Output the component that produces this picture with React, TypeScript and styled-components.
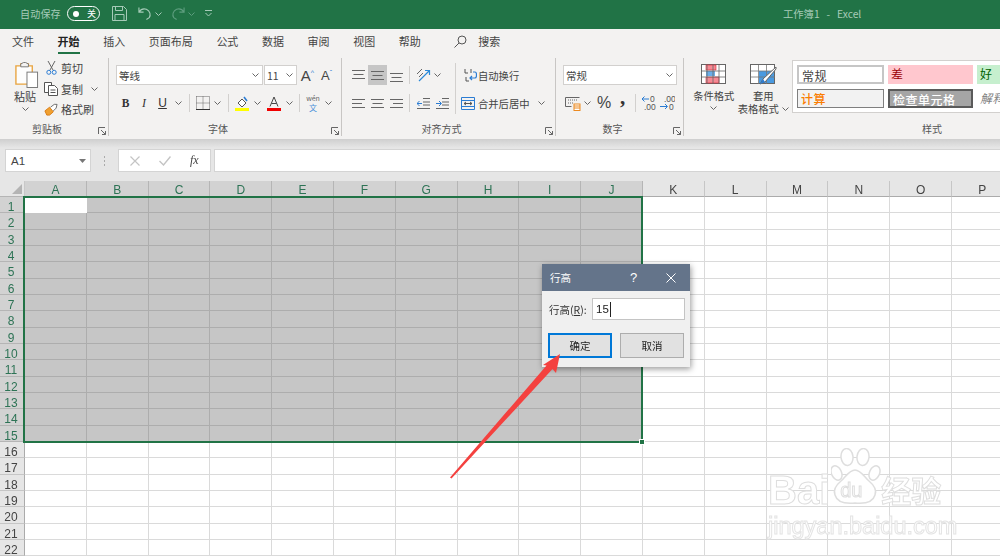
import React from "react";
import styled, { createGlobalStyle } from "styled-components";

const Global = createGlobalStyle`
  html, body { margin: 0; padding: 0; background: #fff; overflow: hidden; }
  * { box-sizing: border-box; }
`;

const FONT = `"Noto Sans CJK SC", "Liberation Sans", sans-serif`;

const Page = styled.div`
  position: relative;
  width: 1000px;
  height: 557px;
  overflow: hidden;
  font-family: ${FONT};
  font-size: 11px;
  color: #444;
  filter: blur(0.45px);
`;

/* ---------- title bar ---------- */
const TitleBar = styled.div`
  height: 29px;
  background: #217346;
  display: flex;
  align-items: center;
  padding: 0 0 2px 20px;
  color: #a6cbb8;
  font-size: 10px;
`;
const AutoSave = styled.span`
  width: 47px;
  letter-spacing: 0.2px;
`;
const Toggle = styled.span`
  width: 33px;
  height: 15px;
  border: 1px solid #fff;
  border-radius: 8px;
  display: flex;
  align-items: center;
  padding: 0 3px 0 5px;
  justify-content: space-between;
  color: #fff;
  font-size: 9px;
`;
const Knob = styled.span`
  width: 6px;
  height: 6px;
  border-radius: 50%;
  background: #fff;
`;
const QuickIcons = styled.div`
  display: flex;
  align-items: center;
  margin-left: 12px;
`;
const QuickSlot = styled.span<{ $w: number; $end?: boolean }>`
  width: ${(p) => p.$w}px;
  display: flex;
  justify-content: ${(p) => (p.$end ? "flex-end" : "center")};
  align-items: center;
`;
const WindowTitle = styled.div`
  margin-left: 562px;
  white-space: pre;
  font-size: 10.3px;
  color: #a6cbb8;
`;

/* ---------- tabs ---------- */
const Tabs = styled.div`
  height: 25px;
  background: #f3f2f1;
  display: flex;
  align-items: center;
  padding: 0 0 0 12px;
  gap: 23.6px;
  font-size: 11px;
  color: #444;
`;
const Tab = styled.span<{ $active?: boolean }>`
  position: relative;
  line-height: 25px;
  font-weight: ${(p) => (p.$active ? 700 : 400)};
  color: ${(p) => (p.$active ? "#222" : "#444")};
  &::after {
    content: "";
    display: ${(p) => (p.$active ? "block" : "none")};
    position: absolute;
    left: 0;
    right: 0;
    bottom: 0;
    height: 2px;
    background: #217346;
  }
`;
const SearchTab = styled.span`
  display: flex;
  align-items: center;
  margin-left: 10px;
  gap: 11px;
  line-height: 25px;
`;

/* ---------- ribbon ---------- */
const Ribbon = styled.div`
  height: 85px;
  background: #f3f2f1;
  padding: 4px 0 3px;
  display: flex;
`;
const Group = styled.div<{ $w: number; $last?: boolean }>`
  position: relative;
  width: ${(p) => p.$w}px;
  flex: none;
  display: flex;
  flex-direction: column;
  border-right: ${(p) => (p.$last ? "none" : "1px solid #c8c6c4")};
`;
const GroupBody = styled.div<{ $pl: number }>`
  height: 63px;
  display: flex;
  padding-left: ${(p) => p.$pl}px;
`;
const GroupLabel = styled.div<{ $pl?: number }>`
  flex: 1;
  text-align: center;
  font-size: 10px;
  line-height: 15px;
  padding: 1px ${(p) => (p.$pl ? 0 : 14)}px 0 ${(p) => p.$pl ?? 0}px;
  color: #555;
`;
const Launcher = styled.span`
  position: absolute;
  right: 2px;
  bottom: 1px;
  display: flex;
`;

const Column = styled.div`
  display: flex;
  flex-direction: column;
`;
const PasteButton = styled(Column)`
  width: 26px;
  align-items: center;
  padding-top: 4px;
  line-height: 13px;
  color: #444;
  & > svg {
    margin-left: 3px;
  }
`;
const PasteText = styled.span`
  margin-top: 2px;
`;
const ChevronBox = styled.span`
  display: flex;
  justify-content: center;
  align-items: center;
  height: 12px;
`;
const ClipColumn = styled(Column)`
  margin-left: 6px;
`;
const ClipRow = styled.div`
  height: 20.5px;
  display: flex;
  align-items: center;
  gap: 3px;
  color: #444;
`;
const ClipIcon = styled.span`
  width: 14px;
  display: flex;
  justify-content: center;
`;

const ToolRows = styled(Column)`
  padding-top: 7px;
  gap: 8px;
`;
const ToolRow = styled.div`
  height: 20px;
  display: flex;
  align-items: center;
`;
const Combo = styled.div<{ $w: number }>`
  width: ${(p) => p.$w}px;
  height: 20px;
  background: #fff;
  border: 1px solid #d2d0ce;
  display: flex;
  align-items: center;
  justify-content: space-between;
  padding: 0 3px 0 2px;
  margin-right: 1px;
  color: #444;
  font-size: 10.5px;
`;
const Slot = styled.span<{ $w: number; $on?: boolean }>`
  width: ${(p) => p.$w}px;
  height: 20px;
  flex: none;
  display: flex;
  align-items: center;
  justify-content: center;
  background: ${(p) => (p.$on ? "#c6c6c6" : "transparent")};
  color: #444;
`;
const Bold = styled.span`
  font: 700 11.5px "Liberation Serif", serif;
  color: #333;
`;
const Italic = styled.span`
  font: italic 400 12px "Liberation Serif", serif;
  color: #333;
`;
const Under = styled.span`
  font: 400 12px "Liberation Sans", sans-serif;
  color: #333;
  text-decoration: underline;
`;
const GrowA = styled.span<{ $s: number }>`
  font: 400 ${(p) => p.$s}px "Liberation Sans", sans-serif;
  color: #444;
`;
const Caret = styled.sup<{ $c: string }>`
  font-size: 7px;
  line-height: 0;
  color: ${(p) => p.$c};
`;
const Sep = styled.span`
  width: 1px;
  height: 18px;
  background: #d2d0ce;
  flex: none;
`;
const SepSlot = styled.span<{ $w: number }>`
  width: ${(p) => p.$w}px;
  flex: none;
  display: flex;
  justify-content: center;
`;
const TallSep = styled.span`
  width: 1px;
  height: 51px;
  margin: 5px 5px 0 0;
  background: #d2d0ce;
  flex: none;
`;
const WideLabel = styled.span<{ $ml?: number; $gap: number }>`
  display: flex;
  align-items: center;
  margin-left: ${(p) => p.$ml ?? 0}px;
  gap: ${(p) => p.$gap}px;
  color: #444;
  font-size: 10.3px;
  white-space: nowrap;
`;
const WenIcon = styled.span`
  display: flex;
  flex-direction: column;
  align-items: center;
  font-size: 7px;
  line-height: 9px;
  color: #666;
  & > b {
    font-weight: 400;
    font-size: 8px;
    line-height: 9px;
    color: #4a90d9;
  }
`;
const Percent = styled.span`
  font: 400 16px "Liberation Sans", sans-serif;
  color: #444;
`;
const Comma = styled.span`
  font: 700 21px "Liberation Serif", serif;
  line-height: 12px;
  height: 12px;
  margin-bottom: 12px;
  color: #333;
`;
const StyleButton = styled(Column)<{ $w: number; $ml: number }>`
  width: ${(p) => p.$w}px;
  margin-left: ${(p) => p.$ml}px;
  align-items: center;
  padding-top: 6px;
  font-size: 10.3px;
  line-height: 13px;
  color: #444;
  white-space: nowrap;
`;
const StyleCaption = styled.span`
  margin-top: 4px;
`;
const Inline = styled.span`
  display: flex;
  align-items: center;
  gap: 3px;
`;
const Gallery = styled.div`
  margin: 2px 0 0 3px;
  width: 210px;
  height: 53px;
  background: #fff;
  border: 1px solid #d2d0ce;
  border-right: none;
  overflow: hidden;
  display: grid;
  grid-template-columns: 87px 85px 40px;
  grid-template-rows: 19px 19px;
  column-gap: 4px;
  row-gap: 5px;
  padding: 4px 0 0 4px;
`;
const StyleCell = styled.div<{ $bg: string; $c: string; $b?: string; $w?: number; $i?: boolean }>`
  background: ${(p) => p.$bg};
  color: ${(p) => p.$c};
  border: ${(p) => p.$b ?? "none"};
  font-weight: ${(p) => p.$w ?? 400};
  font-style: ${(p) => (p.$i ? "italic" : "normal")};
  font-size: 12px;
  letter-spacing: 0.5px;
  padding-left: 3px;
  line-height: 17px;
  white-space: nowrap;
  overflow: hidden;
`;

/* ---------- formula bar ---------- */
const RibbonShadow = styled.div`
  height: 9px;
  background: linear-gradient(#cfcfcf, #e6e6e6);
`;
const FormulaBar = styled.div`
  height: 25px;
  background: #e6e6e6;
  display: flex;
  padding: 1px 0 1px 5px;
`;
const NameBox = styled.div`
  width: 86px;
  background: #fff;
  border: 1px solid #d4d4d4;
  display: flex;
  align-items: center;
  justify-content: space-between;
  padding: 0 4px 0 5px;
  font: 400 11.5px "Liberation Sans", sans-serif;
  color: #444;
`;
const Dots = styled.div`
  width: 27px;
  display: flex;
  flex-direction: column;
  align-items: center;
  justify-content: center;
  gap: 2px;
  & > i {
    width: 1px;
    height: 2px;
    background: #aaa;
  }
`;
const FxBox = styled.div`
  width: 93px;
  background: #fff;
  border: 1px solid #d4d4d4;
  display: flex;
  align-items: center;
  justify-content: space-around;
  padding: 0 2px;
`;
const FxText = styled.span`
  font: italic 400 12px "Liberation Serif", serif;
  color: #444;
`;
const FormulaInput = styled.div`
  flex: 1;
  margin-left: 3px;
  background: #fff;
  border: 1px solid #d4d4d4;
  border-right: none;
`;
const Spacer = styled.div`
  height: 8px;
  background: #e6e6e6;
`;

/* ---------- sheet ---------- */
const Sheet = styled.div`
  display: grid;
  grid-template-columns: 25px repeat(16, 61.8px);
  grid-template-rows: 16px repeat(22, 16.33px);
  font: 400 12px "Liberation Sans", sans-serif;
`;
const Corner = styled.div`
  background: #e6e6e6;
  border-right: 1px solid #c8c8c8;
  border-bottom: 1px solid #b5b5b5;
  position: relative;
  &::after {
    content: "";
    position: absolute;
    right: 2px;
    bottom: 2px;
    border-style: solid;
    border-width: 0 0 10px 10px;
    border-color: transparent transparent #b4b4b4 transparent;
  }
`;
const ColHead = styled.div<{ $sel: boolean }>`
  background: ${(p) => (p.$sel ? "#d2d2d2" : "#e6e6e6")};
  color: ${(p) => (p.$sel ? "#2d7355" : "#444")};
  border-right: 1px solid ${(p) => (p.$sel ? "#b5b5b5" : "#c6c6c6")};
  border-bottom: 1px solid ${(p) => (p.$sel ? "#217346" : "#ababab")};
  text-align: center;
  line-height: 18px;
`;
const RowHead = styled.div<{ $sel: boolean }>`
  background: ${(p) => (p.$sel ? "#d2d2d2" : "#e6e6e6")};
  color: ${(p) => (p.$sel ? "#2d7355" : "#444")};
  border-right: 1px solid ${(p) => (p.$sel ? "#217346" : "#ababab")};
  border-bottom: 1px solid ${(p) => (p.$sel ? "#b5b5b5" : "#c6c6c6")};
  text-align: center;
  padding-right: 2px;
  line-height: 20px;
  overflow: hidden;
`;
const Cell = styled.div<{ $sel: boolean; $active: boolean }>`
  background: ${(p) => (p.$active ? "#fff" : p.$sel ? "#c6c6c6" : "#fff")};
  border-right: 1px solid ${(p) => (p.$active ? "#fff" : p.$sel ? "#adadad" : "#dadada")};
  border-bottom: 1px solid ${(p) => (p.$active ? "#fff" : p.$sel ? "#adadad" : "#dadada")};
`;
const SelectionBox = styled.div`
  position: absolute;
  left: 23px;
  top: 196px;
  width: 620px;
  height: 247px;
  border: 2px solid #217346;
  pointer-events: none;
`;
const FillHandle = styled.span`
  position: absolute;
  right: -4px;
  bottom: -4px;
  width: 6px;
  height: 6px;
  background: #217346;
  border: 1px solid #fff;
`;

/* ---------- dialog ---------- */
const Dialog = styled.div`
  position: absolute;
  left: 542px;
  top: 264px;
  width: 148px;
  height: 103px;
  background: #f0f0f0;
  box-shadow: 1px 2px 6px rgba(0, 0, 0, 0.4);
  display: flex;
  flex-direction: column;
`;
const DialogTitle = styled.div`
  height: 27px;
  background: #64748a;
  color: #fff;
  display: flex;
  align-items: center;
  padding-left: 8px;
  font-size: 10.5px;
  white-space: nowrap;
`;
const DialogHelp = styled.span`
  margin-left: 59px;
  width: 36px;
  flex: none;
  font: 400 13px "Liberation Sans", sans-serif;
`;
const DialogField = styled.div`
  display: flex;
  align-items: center;
  padding: 7px 0 0 7px;
  font-size: 10.5px;
  color: #333;
`;
const FieldLabel = styled.span`
  width: 43px;
  white-space: nowrap;
  & > u {
    text-decoration: underline;
  }
`;
const FieldInput = styled.div`
  width: 93px;
  height: 22px;
  background: #fff;
  border: 1px solid #c4c4c4;
  display: flex;
  align-items: center;
  padding-left: 3px;
  font: 400 11.5px "Liberation Sans", sans-serif;
  color: #222;
  &::after {
    content: "";
    width: 1px;
    height: 15px;
    background: #222;
    margin-left: 1px;
  }
`;
const DialogButtons = styled.div`
  display: flex;
  gap: 8px;
  padding: 13px 0 0 6px;
`;
const DialogButton = styled.div<{ $primary?: boolean }>`
  width: 64px;
  height: 25px;
  background: #e1e1e1;
  border: ${(p) => (p.$primary ? "2px solid #0078d7" : "1px solid #adadad")};
  display: flex;
  align-items: center;
  justify-content: center;
  font-size: 10.5px;
  color: #222;
`;

/* ---------- overlays ---------- */
const ArrowLayer = styled.svg`
  position: absolute;
  left: 0;
  top: 0;
  pointer-events: none;
`;
const Watermark = styled.div`
  position: absolute;
  left: 768px;
  top: 448px;
  width: 182px;
  height: 92px;
  pointer-events: none;
`;
const WmLogo = styled.div`
  display: flex;
  align-items: flex-end;
`;
const WmBai = styled.span`
  font: 700 40px "Liberation Sans", sans-serif;
  line-height: 44px;
  height: 56px;
  padding-top: 16px;
  color: #fff;
  -webkit-text-stroke: 1px #dedede;
`;
const WmPaw = styled.span`
  position: relative;
  width: 50px;
  height: 60px;
  margin-left: 1px;
  flex: none;
`;
const WmDu = styled.span`
  position: absolute;
  left: 9px;
  top: 30px;
  font: 400 20px "Liberation Sans", sans-serif;
  line-height: 24px;
  color: #fff;
  -webkit-text-stroke: 1px #dedede;
`;
const WmJing = styled.span`
  font: 700 30px "Noto Sans CJK SC", sans-serif;
  line-height: 38px;
  height: 38px;
  color: #fff;
  -webkit-text-stroke: 1px #dedede;
  white-space: nowrap;
`;
const WmUrl = styled.div`
  margin-top: 5px;
  font: 400 23.5px "Liberation Sans", sans-serif;
  line-height: 26px;
  color: #fff;
  -webkit-text-stroke: 1px #e4e4e4;
  white-space: nowrap;
`;

/* ---------- icons ---------- */
const Chev = ({ c = "#666" }: { c?: string }) => (
  <svg width="7" height="4" viewBox="0 0 7 4"><path d="M.5.5l3 3 3-3" fill="none" stroke={c} /></svg>
);
const SaveIcon = () => (
  <svg width="15" height="15" viewBox="0 0 15 15" fill="none" stroke="#a6cbb8"><path d="M.5.5h11l3 3v11H.5zM3.500.5v4h7v-4M3 14.500V8.500h9v6" /></svg>
);
const UndoIcon = ({ c }: { c: string }) => (
  <svg width="14" height="15" viewBox="0 0 15 15" fill="none" stroke={c} strokeWidth="1.2"><path d="M1 1v5h5M1 6c2-3 5-4 8-3 4 2 5 6 3 9l-3 2" /></svg>
);
const RedoIcon = ({ c }: { c: string }) => (
  <svg width="14" height="15" viewBox="0 0 15 15" fill="none" stroke={c} strokeWidth="1.2"><path d="M14 1v5H9M14 6c-2-3-5-4-8-3-4 2-5 6-3 9l3 2" /></svg>
);
const CustomizeIcon = () => (
  <svg width="7" height="7" viewBox="0 0 7 7" fill="none" stroke="#a6cbb8"><path d="M0 .5h7M.5 3l3 3 3-3" /></svg>
);
const SearchIcon = () => (
  <svg width="13" height="13" viewBox="0 0 13 13" fill="none" stroke="#555"><circle cx="8" cy="5" r="4" /><path d="M5 8l-4.500 4.500" /></svg>
);
const PasteIcon = () => (
  <svg width="25" height="26" viewBox="0 0 26 27">
    <path d="M2 4h5v-2h8v2h4v19H2z" fill="#fdfdfd" stroke="#e8a33d" strokeWidth="1.4" />
    <path d="M7 5V2l3-1.500h2l3 1.500V5z" fill="#f3f2f1" stroke="#777" />
    <rect x="13.500" y="10.500" width="11" height="16" fill="#fff" stroke="#777" />
  </svg>
);
const ScissorsIcon = () => (
  <svg width="11" height="14" viewBox="0 0 11 14" fill="none">
    <path d="M2 0l5 9M9 0L4 9" stroke="#666" />
    <circle cx="2.800" cy="11.300" r="2" stroke="#2b7cd3" />
    <circle cx="8.200" cy="11.300" r="2" stroke="#2b7cd3" />
  </svg>
);
const CopyIcon = () => (
  <svg width="14" height="14" viewBox="0 0 14 14" fill="#fff" stroke="#555">
    <path d="M.5.500h7v10h-7z" />
    <path d="M4.500 3.500h6l3 3v7h-9z" />
    <path d="M6.500 8h5M6.500 10.500h5" />
  </svg>
);
const BrushIcon = () => (
  <svg width="15" height="13" viewBox="0 0 15 13">
    <path d="M1 8l5-4 4 5-4 3.500H3z" fill="#f0a030" stroke="#d87a10" />
    <path d="M7 4l4-3 3 0-1 4-3 3" fill="#fff" stroke="#666" />
  </svg>
);
const LauncherIcon = () => (
  <svg width="8" height="8" viewBox="0 0 8 8" fill="none" stroke="#666"><path d="M.5 7V.5H7M3 3l4.500 4.500M7.500 4v3.500H4" /></svg>
);
const BorderIcon = () => (
  <svg width="14" height="14" viewBox="0 0 14 14" fill="none" stroke="#666" strokeDasharray="1 1"><path d="M.5.5h13v13M.5.5v13M7 .5v13M.5 7h13" /><path d="M0 13.500h14" stroke="#333" strokeDasharray="none" /></svg>
);
const FillIcon = () => (
  <svg width="15" height="15" viewBox="0 0 15 15">
    <path d="M3 7l4-4 4 4-4 4z" fill="#fff" stroke="#555" />
    <path d="M9 1l3 4" stroke="#2b7cd3" strokeWidth="1.500" />
    <rect y="12" width="14" height="3" fill="#ffff00" />
  </svg>
);
const FontColorIcon = () => (
  <svg width="14" height="15" viewBox="0 0 14 15">
    <path d="M3 10.500L7 1l4 9.500M4.500 7.500h5" fill="none" stroke="#444" />
    <rect y="12" width="14" height="3" fill="#f00000" />
  </svg>
);
const Lines = ({ top, w = 13, align = "c", h = 13 }: { top: number; w?: number; align?: "l" | "c" | "r"; h?: number }) => {
  const ws = [w, w - 3, w];
  const gap = 4;
  return (
    <svg width="13" height={h} viewBox={`0 0 13 ${h}`} stroke="#666">
      {ws.map((lw, i) => {
        const x = align === "l" ? 0 : align === "r" ? 13 - lw : (13 - lw) / 2;
        return <path key={i} d={`M${x} ${top + i * gap + 0.5}h${lw}`} />;
      })}
    </svg>
  );
};
const OrientIcon = () => (
  <svg width="15" height="14" viewBox="0 0 15 14" fill="none">
    <path d="M1 6l5-5M3 9l4-4" stroke="#666" />
    <path d="M3 13L13 3M9 2.500h4.500V7" stroke="#2b8ad8" strokeWidth="1.200" />
  </svg>
);
const IndentIcon = ({ flip }: { flip?: boolean }) => (
  <svg width="13" height="11" viewBox="0 0 13 11" fill="none">
    <path d="M6 .5h7M6 4h7M6 7h7M0 10.500h13" stroke="#666" />
    <path d={flip ? "M0 5.500h5M3 3l2.500 2.500L3 8" : "M5 5.500H0M2.500 3L0 5.500 2.500 8"} stroke="#2b7cd3" />
  </svg>
);
const WrapIcon = () => (
  <svg width="14" height="14" viewBox="0 0 14 14" fill="none">
    <path d="M2 1v4h3M3 9v4h3M8 1v4" stroke="#555" />
    <path d="M10 4h2c2 0 2 6 0 6H7M9 8l-2 2 2 2" stroke="#2b7cd3" strokeWidth="1.200" />
  </svg>
);
const MergeIcon = () => (
  <svg width="14" height="13" viewBox="0 0 14 13" fill="none">
    <path d="M.5.5h13v12H.5zM.5 3.500h13M.5 9.500h13" stroke="#2b7cd3" />
    <path d="M3 6.500h8M5 5L3 6.500 5 8M9 5l2 1.500L9 8" stroke="#555" />
  </svg>
);
const AccountIcon = () => (
  <svg width="16" height="15" viewBox="0 0 16 15" fill="none">
    <path d="M.5 1.500h14M.5 1.500v9h6" stroke="#666" />
    <path d="M3 4h9M3 7h5" stroke="#666" strokeDasharray="1 1" />
    <rect x="9" y="8" width="6" height="6.500" fill="#fff" stroke="#ec8a20" />
    <path d="M9 10h6M9 12h6" stroke="#ec8a20" />
  </svg>
);
const DecIcon = ({ more }: { more?: boolean }) => (
  <svg width="15" height="16" viewBox="0 0 15 16">
    <text x={more ? 4 : 9} y="7" fontSize="8.500" fontFamily="Liberation Sans" fill="#555">{more ? ".00" : "0"}</text>
    <text x={more ? 9 : 3} y="15" fontSize="8.500" fontFamily="Liberation Sans" fill="#555">{more ? "0" : ".00"}</text>
    {more
      ? <path d="M0 11.500h7M5 9l2.500 2.500L5 14" stroke="#2b7cd3" fill="none" />
      : <path d="M8 4H1M3.500 1.500L1 4l2.500 2.500" stroke="#2b7cd3" fill="none" />}
  </svg>
);
const CondFormatIcon = () => (
  <svg width="26" height="21" viewBox="0 0 26 21">
    <rect x=".5" y=".5" width="24" height="19" fill="#fff" stroke="#666" />
    <path d="M5 1h10v5H5z" fill="#f58a94" stroke="#d23" strokeWidth=".6" />
    <path d="M5 7h9v5H5z" fill="#6aaee8" />
    <path d="M5 13h13v6H5z" fill="#f58a94" stroke="#d23" strokeWidth=".6" />
    <path d="M6 1v19M12 1v19M18 1v19M1 7h24M1 13h24" stroke="#666" strokeWidth=".8" fill="none" />
  </svg>
);
const TableFormatIcon = () => (
  <svg width="27" height="21" viewBox="0 0 27 21">
    <rect x=".5" y=".5" width="24" height="19" fill="#fff" stroke="#666" />
    <rect x="9" y="7" width="15" height="12" fill="#4a9ae0" />
    <path d="M8.500 1v19M16.500 1v19M1 7h24M1 13h24" stroke="#777" strokeWidth=".8" fill="none" />
    <path d="M26 3L13 15l-3 5 5-2L26 5z" fill="#fff" stroke="#666" />
    <path d="M13 15l-3 5 5-2z" fill="#2b7cd3" />
  </svg>
);
const CloseIcon = () => (
  <svg width="10" height="10" viewBox="0 0 10 10" stroke="#fff"><path d="M.5.5l9 9M9.500.5l-9 9" /></svg>
);
const CrossIcon = () => (
  <svg width="10" height="10" viewBox="0 0 10 10" stroke="#c4c4c4" strokeWidth="1.200"><path d="M.5.5l9 9M9.500.5l-9 9" /></svg>
);
const CheckIcon = () => (
  <svg width="12" height="10" viewBox="0 0 12 10" fill="none" stroke="#c4c4c4" strokeWidth="1.400"><path d="M.5 5l4 4 7-8.500" /></svg>
);
const DownTriangle = () => (
  <svg width="7" height="4" viewBox="0 0 7 4"><path d="M0 0h7L3.500 4z" fill="#777" /></svg>
);
const PawIcon = () => (
  <svg width="50" height="60" viewBox="0 0 50 60" fill="#fff" stroke="#dedede" strokeWidth="1.500">
    <ellipse cx="16" cy="9" rx="6" ry="8.500" transform="rotate(-6 16 9)" />
    <ellipse cx="32" cy="9" rx="6" ry="8.500" transform="rotate(6 32 9)" />
    <ellipse cx="5.500" cy="25" rx="5" ry="7.500" transform="rotate(-25 5.500 25)" />
    <ellipse cx="43.500" cy="25" rx="5" ry="7.500" transform="rotate(25 43.500 25)" />
    <path d="M24 22c6 0 9 7 14 11 6 5 8 9 6 14-2 7-10 9-20 8-10 1-18-1-20-8-2-5 0-9 6-14 5-4 8-11 14-11z" />
  </svg>
);

/* ---------- data ---------- */
const COLS = "ABCDEFGHIJKLMNOP".split("");
const ROWS = Array.from({ length: 22 }, (_, i) => i + 1);

export default function App() {
  return (
    <Page>
      <Global />
      <TitleBar>
        <AutoSave>自动保存</AutoSave>
        <Toggle><Knob />关</Toggle>
        <QuickIcons>
          <QuickSlot $w={15}><SaveIcon /></QuickSlot>
          <QuickSlot $w={25} $end><UndoIcon c="#a6cbb8" /></QuickSlot>
          <QuickSlot $w={10} $end><Chev c="#a6cbb8" /></QuickSlot>
          <QuickSlot $w={23} $end><RedoIcon c="#5d9d7e" /></QuickSlot>
          <QuickSlot $w={10} $end><Chev c="#5d9d7e" /></QuickSlot>
          <QuickSlot $w={26}><CustomizeIcon /></QuickSlot>
        </QuickIcons>
        <WindowTitle>工作簿1   -   Excel</WindowTitle>
      </TitleBar>

      <Tabs>
        <Tab>文件</Tab>
        <Tab $active>开始</Tab>
        <Tab>插入</Tab>
        <Tab>页面布局</Tab>
        <Tab>公式</Tab>
        <Tab>数据</Tab>
        <Tab>审阅</Tab>
        <Tab>视图</Tab>
        <Tab>帮助</Tab>
        <SearchTab><SearchIcon />搜索</SearchTab>
      </Tabs>

      <Ribbon>
        <Group $w={109}>
          <GroupBody $pl={12}>
            <PasteButton>
              <PasteIcon />
              <PasteText>粘贴</PasteText>
              <ChevronBox><Chev /></ChevronBox>
            </PasteButton>
            <ClipColumn>
              <ClipRow><ClipIcon><ScissorsIcon /></ClipIcon>剪切</ClipRow>
              <ClipRow><ClipIcon><CopyIcon /></ClipIcon>复制<Slot $w={17}><Chev /></Slot></ClipRow>
              <ClipRow><ClipIcon><BrushIcon /></ClipIcon>格式刷</ClipRow>
            </ClipColumn>
          </GroupBody>
          <GroupLabel>剪贴板</GroupLabel>
          <Launcher><LauncherIcon /></Launcher>
        </Group>

        <Group $w={233}>
          <GroupBody $pl={7}>
            <ToolRows>
              <ToolRow>
                <Combo $w={147}>等线<Chev /></Combo>
                <Combo $w={33}>11<Chev /></Combo>
                <Slot $w={19}><GrowA $s={15}>A<Caret $c="#2b7cd3">^</Caret></GrowA></Slot>
                <Slot $w={19}><GrowA $s={13}>A<Caret $c="#2b7cd3">ˇ</Caret></GrowA></Slot>
              </ToolRow>
              <ToolRow>
                <Slot $w={19}><Bold>B</Bold></Slot>
                <Slot $w={18}><Italic>I</Italic></Slot>
                <Slot $w={19}><Under>U</Under></Slot>
                <Slot $w={12}><Chev /></Slot>
                <SepSlot $w={10}><Sep /></SepSlot>
                <Slot $w={17}><BorderIcon /></Slot>
                <Slot $w={12}><Chev /></Slot>
                <SepSlot $w={10}><Sep /></SepSlot>
                <Slot $w={18}><FillIcon /></Slot>
                <Slot $w={12}><Chev /></Slot>
                <Slot $w={21}><FontColorIcon /></Slot>
                <Slot $w={11}><Chev /></Slot>
                <SepSlot $w={8}><Sep /></SepSlot>
                <Slot $w={20}><WenIcon>wén<b>文</b></WenIcon></Slot>
                <Slot $w={10}><Chev /></Slot>
              </ToolRow>
            </ToolRows>
          </GroupBody>
          <GroupLabel>字体</GroupLabel>
          <Launcher><LauncherIcon /></Launcher>
        </Group>

        <Group $w={214}>
          <GroupBody $pl={7}>
            <ToolRows>
              <ToolRow>
                <Slot $w={19}><Lines top={1} /></Slot>
                <Slot $w={19} $on><Lines top={2} /></Slot>
                <Slot $w={19}><Lines top={4} /></Slot>
                <SepSlot $w={7}><Sep /></SepSlot>
                <Slot $w={20}><OrientIcon /></Slot>
                <Slot $w={9}><Chev /></Slot>
              </ToolRow>
              <ToolRow>
                <Slot $w={19}><Lines top={2} align="l" /></Slot>
                <Slot $w={19}><Lines top={2} /></Slot>
                <Slot $w={19}><Lines top={2} align="r" /></Slot>
                <SepSlot $w={7}><Sep /></SepSlot>
                <Slot $w={20}><IndentIcon /></Slot>
                <Slot $w={19}><IndentIcon flip /></Slot>
              </ToolRow>
            </ToolRows>
            <SepSlot $w={3} />
            <TallSep />
            <ToolRows>
              <ToolRow><WideLabel $ml={2} $gap={1}><WrapIcon />自动换行</WideLabel></ToolRow>
              <ToolRow>
                <WideLabel $gap={3}><MergeIcon />合并后居中</WideLabel>
                <Slot $w={24}><Chev /></Slot>
              </ToolRow>
            </ToolRows>
          </GroupBody>
          <GroupLabel>对齐方式</GroupLabel>
          <Launcher><LauncherIcon /></Launcher>
        </Group>

        <Group $w={128}>
          <GroupBody $pl={7}>
            <ToolRows>
              <ToolRow><Combo $w={114}>常规<Chev /></Combo></ToolRow>
              <ToolRow>
                <Slot $w={19}><AccountIcon /></Slot>
                <Slot $w={11}><Chev /></Slot>
                <Slot $w={22}><Percent>%</Percent></Slot>
                <Slot $w={15}><Comma>,</Comma></Slot>
                <SepSlot $w={10}><Sep /></SepSlot>
                <Slot $w={17}><DecIcon /></Slot>
                <Slot $w={20}><DecIcon more /></Slot>
              </ToolRow>
            </ToolRows>
          </GroupBody>
          <GroupLabel>数字</GroupLabel>
          <Launcher><LauncherIcon /></Launcher>
        </Group>

        <Group $w={316} $last>
          <GroupBody $pl={0}>
            <StyleButton $w={42} $ml={9}>
              <CondFormatIcon />
              <StyleCaption>条件格式</StyleCaption>
              <ChevronBox><Chev /></ChevronBox>
            </StyleButton>
            <StyleButton $w={52} $ml={3}>
              <TableFormatIcon />
              <StyleCaption>套用</StyleCaption>
              <Inline>表格格式<Chev /></Inline>
            </StyleButton>
            <Gallery>
              <StyleCell $bg="#fff" $c="#444" $b="2px solid #c6c6c6">常规</StyleCell>
              <StyleCell $bg="#ffc7ce" $c="#9c0006">差</StyleCell>
              <StyleCell $bg="#c6efce" $c="#006100">好</StyleCell>
              <StyleCell $bg="#f2f2f2" $c="#fa7d00" $b="1px solid #7f7f7f" $w={500}>计算</StyleCell>
              <StyleCell $bg="#a5a5a5" $c="#fff" $b="2px solid #5a5a5a" $w={500}>检查单元格</StyleCell>
              <StyleCell $bg="#fff" $c="#7f7f7f" $i>解释性文本</StyleCell>
            </Gallery>
          </GroupBody>
          <GroupLabel $pl={180}>样式</GroupLabel>
        </Group>
      </Ribbon>

      <RibbonShadow />
      <FormulaBar>
        <NameBox>A1<DownTriangle /></NameBox>
        <Dots><i /><i /><i /></Dots>
        <FxBox><CrossIcon /><CheckIcon /><FxText>fx</FxText></FxBox>
        <FormulaInput />
      </FormulaBar>
      <Spacer />

      <Sheet>
        <Corner />
        {COLS.map((c, i) => <ColHead key={c} $sel={i < 10}>{c}</ColHead>)}
        {ROWS.map((r) => (
          <React.Fragment key={r}>
            <RowHead $sel={r <= 15}>{r}</RowHead>
            {COLS.map((c, i) => (
              <Cell key={c} $sel={r <= 15 && i < 10} $active={r === 1 && i === 0} />
            ))}
          </React.Fragment>
        ))}
      </Sheet>

      <SelectionBox><FillHandle /></SelectionBox>

      <Watermark>
        <WmLogo>
          <WmBai>Bai</WmBai>
          <WmPaw>
            <PawIcon />
            <WmDu>du</WmDu>
          </WmPaw>
          <WmJing>经验</WmJing>
        </WmLogo>
        <WmUrl>jingyan.baidu.com</WmUrl>
      </Watermark>

      <Dialog>
        <DialogTitle>
          行高
          <DialogHelp>?</DialogHelp>
          <CloseIcon />
        </DialogTitle>
        <DialogField>
          <FieldLabel>行高(<u>R</u>):</FieldLabel>
          <FieldInput>15</FieldInput>
        </DialogField>
        <DialogButtons>
          <DialogButton $primary>确定</DialogButton>
          <DialogButton>取消</DialogButton>
        </DialogButtons>
      </Dialog>

      <ArrowLayer width="1000" height="557" viewBox="0 0 1000 557">
        <polygon points="560,354 556,373 552.500,369 451.500,478.500 450,477.500 546.500,365.500 543,365" fill="#f4413f" />
      </ArrowLayer>
    </Page>
  );
}
